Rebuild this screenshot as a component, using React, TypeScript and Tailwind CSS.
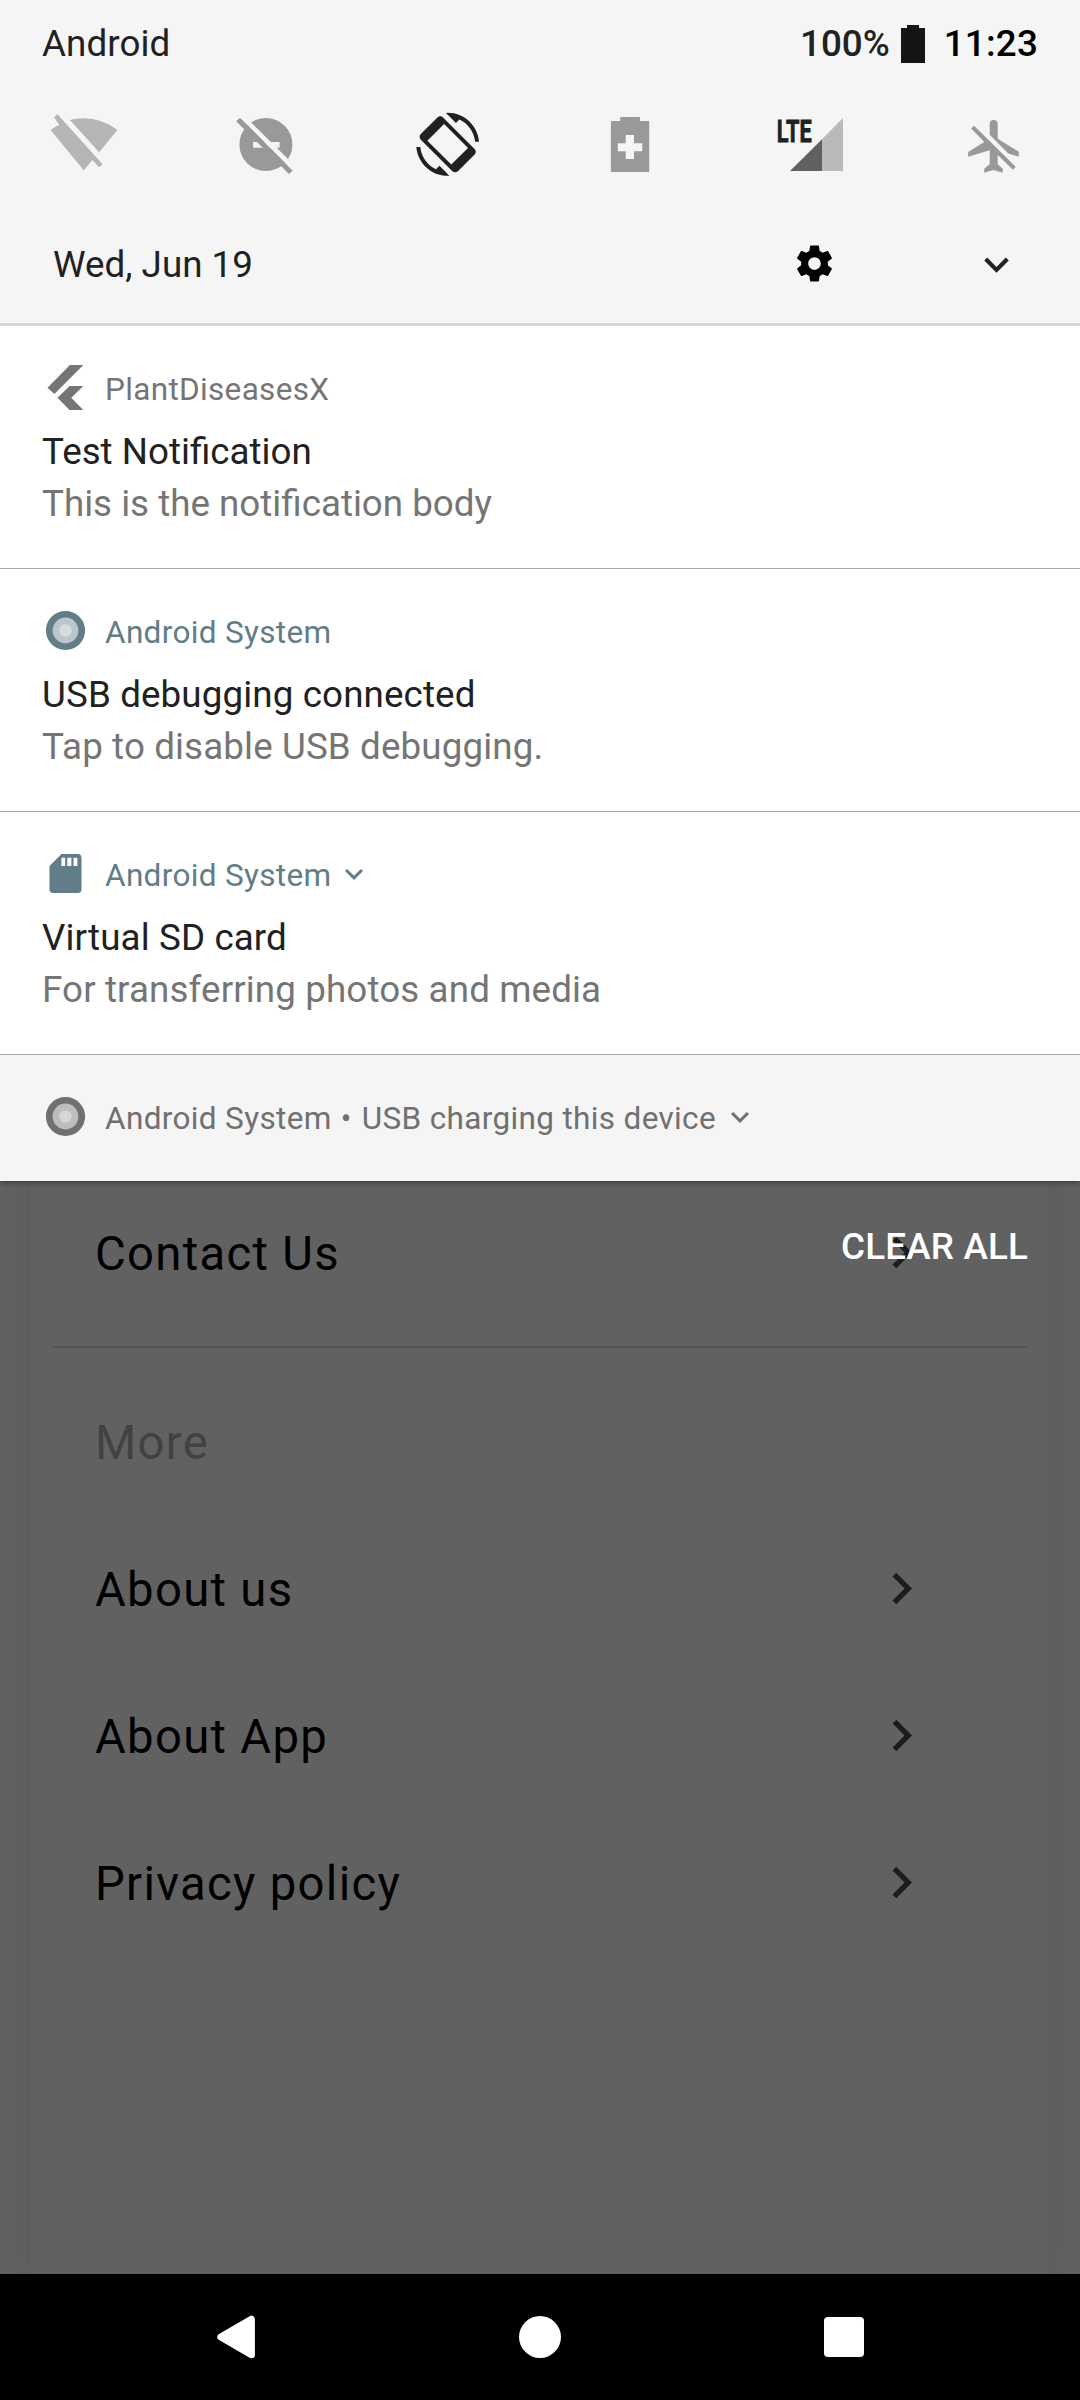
import type { ReactNode } from "react";

const MUTED = "#999999";

function TileIcon({ children }: { children: ReactNode }) {
  return (
    <svg width="80" height="80" viewBox="0 0 80 80" className="shrink-0">
      {children}
    </svg>
  );
}

function WifiOff() {
  return (
    <TileIcon>
      <path
        fill="#b5b5b5"
        d="M25.9 15Q32 13.3 39.7 13.3Q58.5 13.6 73.4 25L55.2 47.3ZM6.6 25Q10.5 21.9 15.2 19.7L10 12.3L13.5 9.3L58.6 59.3L55.2 62.3L48.3 55L39.7 65.3Z"
      />
    </TileIcon>
  );
}

function DoNotDisturbOff() {
  return (
    <TileIcon>
      <circle cx="39.9" cy="39.5" r="26.5" fill={MUTED} />
      <path fill="#f5f5f5" d="M14 12.7L18 10.3L70.3 62.2L66.7 65.7Z" />
      <path fill="#f5f5f5" d="M27.1 37h26.5v5.7H27.1z" />
      <path fill={MUTED} d="M10.2 16.3L14 12.7L66.7 65.7L62.9 69Z" />
    </TileIcon>
  );
}

function AutoRotate() {
  return (
    <TileIcon>
      <g transform="translate(8.2 7.8) scale(2.625)" fill="#212121">
        <path d="M16.48 2.52c3.27 1.55 5.61 4.72 5.97 8.48h1.5C23.44 4.84 18.29 0 12 0l-.66.03 3.81 3.81 1.33-1.32z" />
        <path
          fillRule="evenodd"
          d="M10.23 1.75c-.59-.59-1.54-.59-2.12 0L1.75 8.11c-.59.59-.59 1.54 0 2.12l12.02 12.02c.59.59 1.54.59 2.12 0l6.36-6.36c.59-.59.59-1.54 0-2.12L10.23 1.75zM10.62 4.26L19.74 13.38L13.38 19.74L4.26 10.62Z"
        />
        <path d="M7.52 21.48C4.25 19.94 1.91 16.76 1.55 13H.05C.56 19.16 5.71 24 12 24l.66-.03-3.81-3.81-1.33 1.32z" />
      </g>
    </TileIcon>
  );
}

function BatterySaver() {
  return (
    <TileIcon>
      <path
        fill={MUTED}
        fillRule="evenodd"
        d="M30.2 12H49.9V16H59.2V67H20.9V16H30.2ZM35.7 30V38.3H27.8V46.3H35.7V54H44V46.3H52.3V38.3H44V30Z"
      />
    </TileIcon>
  );
}

function LteSignal() {
  return (
    <TileIcon>
      <path fill="#bababa" d="M50 34.2L71 13V66H50Z" />
      <path fill="#606060" d="M18 66L50 34.2V66Z" />
      <text
        x="4.7"
        y="36.8"
        fontFamily="Roboto, sans-serif"
        fontWeight="700"
        fontSize="31.5"
        textLength="35"
        lengthAdjust="spacingAndGlyphs"
        fill="#212121"
        stroke="#212121"
        strokeWidth="0.8"
      >
        LTE
      </text>
    </TileIcon>
  );
}

function AirplaneOff() {
  return (
    <TileIcon>
      <g fill={MUTED}>
        <path d="M35.7 29.7V19A4 4 0 0 1 43.7 19V33.7L64.8 46.8V51.7L54.3 48.6Z" />
        <path d="M17.2 23.5L20.1 20.7L61.7 61.7L58.9 64.8L43.7 50V59.3L48.8 63.7V67.7L39.5 65L30.2 67.7V63.7L35.7 59.3V45.3L14.2 51.7V47L30.3 37.1Z" />
      </g>
    </TileIcon>
  );
}

function Gear() {
  return (
    <svg width="43" height="43" viewBox="0 0 24 24">
      <path d="M19.43 12.98c.04-.32.07-.64.07-.98s-.03-.66-.07-.98l2.11-1.65c.19-.15.24-.42.12-.64l-2-3.46c-.12-.22-.39-.3-.61-.22l-2.49 1c-.52-.4-1.08-.73-1.69-.98l-.38-2.65C14.46 2.18 14.25 2 14 2h-4c-.25 0-.46.18-.49.42l-.38 2.65c-.61.25-1.17.59-1.69.98l-2.49-1c-.23-.09-.49 0-.61.22l-2 3.46c-.13.22-.07.49.12.64l2.11 1.65c-.04.32-.07.65-.07.98s.03.66.07.98l-2.11 1.65c-.19.15-.24.42-.12.64l2 3.46c.12.22.39.3.61.22l2.49-1c.52.4 1.08.73 1.69.98l.38 2.65c.03.24.24.42.49.42h4c.25 0 .46-.18.49-.42l.38-2.65c.61-.25 1.17-.59 1.69-.98l2.49 1c.23.09.49 0 .61-.22l2-3.46c.12-.22.07-.49-.12-.64l-2.11-1.65zM12 15.5c-1.93 0-3.5-1.57-3.5-3.5s1.57-3.5 3.5-3.5 3.5 1.57 3.5 3.5-1.57 3.5-3.5 3.5z" />
    </svg>
  );
}

function ExpandMore({ size, className }: { size: number; className?: string }) {
  return (
    <svg width={size} height={size} viewBox="0 0 24 24" fill="currentColor" className={className}>
      <path d="M16.59 8.59L12 13.17 7.41 8.59 6 10l6 6 6-6z" />
    </svg>
  );
}

function SmallIcon({ children }: { children: ReactNode }) {
  return (
    <svg width="48" height="48" viewBox="0 0 48 48" className="shrink-0">
      {children}
    </svg>
  );
}

function FlutterIcon() {
  return (
    <SmallIcon>
      <path fill="#757575" d="M27.9 1H41.3L12.4 30L5.5 23.7ZM27.6 22H41.3L29.3 33.7L41.3 46H27.6L15.5 33.7Z" />
    </SmallIcon>
  );
}

function RingIcon({ outer, middle, center }: { outer: string; middle: string; center: string }) {
  return (
    <SmallIcon>
      <circle cx="23.5" cy="23.5" r="19.6" fill={outer} />
      <circle cx="23.5" cy="23.5" r="12.9" fill={middle} />
      <circle cx="23.5" cy="23.5" r="6.2" fill={center} />
    </SmallIcon>
  );
}

function SdCardIcon() {
  return (
    <SmallIcon>
      <path
        fill="#607d88"
        fillRule="evenodd"
        d="M19.5 4H35.8Q39.5 4 39.5 7.8V39.2Q39.5 43 35.8 43H11.2Q7.5 43 7.5 39.2V16ZM19.4 7.7V16H23.2V7.7ZM25.3 7.7V16H29.4V7.7ZM31.5 7.7V16H35.4V7.7Z"
      />
    </SmallIcon>
  );
}

interface NotificationProps {
  icon: ReactNode;
  app: string;
  title: string;
  body: string;
  tint: string;
  textClass?: string;
  expandable?: boolean;
}

function Notification({ icon, app, title, body, tint, textClass = "", expandable }: NotificationProps) {
  return (
    <article className="h-[243px] border-b border-[#a6a6a6] bg-white px-[42px] pt-[38px]">
      <div className={"flex h-12 items-center " + tint}>
        {icon}
        <span className="ml-[15px] pt-[3px] text-[31.5px] leading-[46px] tracking-[0.33px]">{app}</span>
        {expandable && <ExpandMore size={36} className="ml-[5px]" />}
      </div>
      <div className={"mt-[14px] text-[36.75px] leading-[52px] " + textClass}>
        <h2 className="text-[#212121]">{title}</h2>
        <p className="text-[#757575]">{body}</p>
      </div>
    </article>
  );
}

function SettingRow({ label }: { label: string }) {
  return (
    <div className="flex h-[147px] items-center justify-between pr-[115px] pl-[64px]">
      <span className="pt-[5px] text-[47.25px] leading-none tracking-[1.3px] text-black">{label}</span>
      <svg width="63" height="63" viewBox="0 0 24 24" fill="#1c1b1f">
        <path d="M10 6L8.59 7.41 13.17 12l-4.58 4.59L10 18l6-6z" />
      </svg>
    </div>
  );
}

export default function App() {
  return (
    <div className="flex h-[2400px] w-[1080px] flex-col overflow-hidden bg-[#616161] font-[Roboto,sans-serif]">
      <section className="relative z-10 shadow-[0_2px_5px_rgba(0,0,0,0.35)]">
        <header className="border-b-3 border-[#d8d8d8] bg-[#f5f5f5]">
          <div className="flex h-[87px] items-center pr-[42px] pl-[42px] text-[36.75px]">
            <span className="flex-1 tracking-[0.1px] text-[#212121]">Android</span>
            <span className="font-medium text-[#212121]">100%</span>
            <svg width="24" height="38" viewBox="0 0 24 38" className="mr-[19px] ml-[11px]">
              <path fill="#151515" d="M6 0H18V3H24V38H0V3H6Z" />
            </svg>
            <span className="font-medium tracking-[0.2px] text-black">11:23</span>
          </div>
          <div className="mt-[18px] flex gap-[102px] pl-[44px]">
            <WifiOff />
            <DoNotDisturbOff />
            <AutoRotate />
            <BatterySaver />
            <LteSignal />
            <AirplaneOff />
          </div>
          <div className="mt-[20px] flex h-[118px] items-center pr-[59.5px] pl-[53px] text-[#212121]">
            <span className="flex-1 pt-[2px] text-[36.75px]">Wed, Jun 19</span>
            <div className="mr-[136px] mb-[2px] text-black">
              <Gear />
            </div>
            <ExpandMore size={49} />
          </div>
        </header>

        <Notification
          icon={<FlutterIcon />}
          app="PlantDiseasesX"
          title="Test Notification"
          body="This is the notification body"
          tint="text-[#757575]"
        />
        <Notification
          icon={<RingIcon outer="#607d88" middle="#bbc6cc" center="#d5dde0" />}
          app="Android System"
          title="USB debugging connected"
          body="Tap to disable USB debugging."
          tint="text-[#607d88]"
          textClass="tracking-[0.12px]"
        />
        <Notification
          icon={<SdCardIcon />}
          app="Android System"
          title="Virtual SD card"
          body="For transferring photos and media"
          tint="text-[#607d88]"
          textClass="tracking-[0.12px]"
          expandable
        />
        <footer className="h-[126px] bg-[#f5f5f5] px-[42px] pt-[38px]">
          <div className="flex h-12 items-center text-[31.5px] leading-[46px] tracking-[0.35px] text-[#707070]">
            <RingIcon outer="#707070" middle="#bdbdbd" center="#d6d6d6" />
            <span className="ml-[15px] pt-[3px]">Android System</span>
            <span className="mr-[10px] ml-[9px] pt-[3px]">•</span>
            <span className="pt-[3px]">USB charging this device</span>
            <ExpandMore size={36} className="ml-[6px]" />
          </div>
        </footer>
      </section>

      <main className="relative h-[1093px] overflow-hidden">
        <div className="-mt-10 ml-[31px] h-[1133px] w-[1017px] bg-[#616161] pt-[38px] shadow-[0_0_30px_rgba(0,0,0,0.08)]">
          <SettingRow label="Contact Us" />
          <hr className="mt-[20px] mr-[20px] ml-[21px] h-[2px] border-0 bg-[#555555]" />
          <div className="mt-[20px] flex h-[147px] items-center pl-[64px]">
            <span className="pt-[5px] text-[47.25px] leading-none tracking-[1.3px] text-[#424242]">More</span>
          </div>
          <SettingRow label="About us" />
          <SettingRow label="About App" />
          <SettingRow label="Privacy policy" />
        </div>
        <button className="absolute top-[40px] right-[52px] text-[36.75px] leading-[52px] font-medium tracking-[0.18px] text-white">
          CLEAR ALL
        </button>
      </main>

      <nav className="flex h-[126px] items-center bg-black">
        <svg width="42" height="46" viewBox="0 0 42 46" className="ml-[215px]">
          <path
            fill="#ffffff"
            stroke="#ffffff"
            strokeWidth="7"
            strokeLinejoin="round"
            d="M5.8 23L36.4 5.2V40.8Z"
          />
        </svg>
        <div className="ml-[262px] h-[42px] w-[42px] rounded-full bg-white" />
        <div className="ml-[263px] h-10 w-10 rounded-[4px] bg-white" />
      </nav>
    </div>
  );
}
